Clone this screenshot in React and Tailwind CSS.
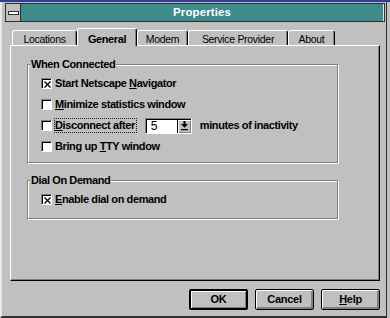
import React from "react";

const F = "font-['Liberation_Sans',Arial,sans-serif]";

function Box({ checked }) {
  return (
    <span className="w-[11px] h-[11px] shrink-0 bg-white border border-t-[#808080] border-l-[#808080] border-b-white border-r-white shadow-[inset_1px_1px_0_#000] flex items-center justify-center">
      {checked && (
        <svg width="7" height="7" viewBox="0 0 7 7" className="ml-[1px] mt-[1px]">
          <path d="M0.5 0.5 L6.5 6.5 M6.5 0.5 L0.5 6.5" stroke="#000" strokeWidth="1.3" fill="none" />
        </svg>
      )}
    </span>
  );
}

function Row({ checked, children, focus, extra }) {
  return (
    <div className="h-[21px] flex items-center pl-[13px]">
      <Box checked={checked} />
      <span
        className={`ml-[2px] border leading-[13px] block whitespace-pre pr-[1px] ${
          focus ? "border-dotted border-[#202020]" : "border-transparent"
        }`}
      >
        {children}
      </span>
      {extra}
    </div>
  );
}

function Group({ label, children, className }) {
  return (
    <div
      className={`relative ml-[16px] w-[311px] border border-[#808080] shadow-[inset_1px_1px_0_#fff,1px_1px_0_#fff] ${className}`}
    >
      <span className="absolute left-[2px] top-[-7px] bg-[#c0c0c0] px-[1px] leading-[13px]">{label}</span>
      {children}
    </div>
  );
}

function Tab({ children, w, selected }) {
  return (
    <div
      className={`${w} flex justify-center rounded-t-[3px] border-t border-l border-white border-r border-r-black shadow-[inset_-1px_0_0_#808080] bg-[#c0c0c0] ${
        selected
          ? "h-[18px] pt-[4px] font-bold text-[11px] tracking-[-0.4px] relative z-20"
          : "h-[15px] mb-[1px] pt-[2px] text-[10.5px] tracking-[-0.3px]"
      }`}
    >
      <span className="leading-[12px]">{children}</span>
    </div>
  );
}

function Btn({ children, def }) {
  return (
    <div
      className={`w-[59px] h-[21px] rounded-[2px] border-black flex items-center justify-center bg-[#c0c0c0] font-bold text-[11px] tracking-[-0.3px] ${
        def
          ? "border-2 shadow-[inset_1px_1px_0_#fff,inset_-1px_-1px_0_#808080]"
          : "border shadow-[inset_1px_1px_0_#fff,inset_-1px_-1px_0_#808080,inset_-2px_-2px_0_#808080]"
      }`}
    >
      {children}
    </div>
  );
}

export default function App() {
  return (
    <div className={`w-[390px] h-[318px] bg-[#c0c0c0] overflow-hidden text-black ${F}`}>
      <div className="h-[2px] bg-[#2a3d9c]" />
      <div className="h-[316px] w-[387px] border-l-2 border-l-[#e8e8e8] border-b-2 border-b-[#303030] border-r border-r-[#303030] pl-[3px] pr-[1px] pt-[1px]">
        {/* Title bar */}
        <div className="h-[19px] flex border border-[#303030]">
          <div className="w-[15px] border-r border-[#303030] bg-[#c0c0c0] flex items-center justify-center">
            <div className="w-[11px] h-[4px] bg-white border border-[#303030]" />
          </div>
          <div className="flex-1 bg-[#3e8b8b] flex items-center justify-center border-r border-r-[#d8e8e8]">
            <span className="text-white font-bold text-[11.5px] leading-[13px] tracking-[0.1px]">Properties</span>
          </div>
        </div>

        {/* Tabs */}
        <div className="mt-[6px] ml-[7px] h-[18px] -mb-[1px] flex items-end relative z-10">
          <Tab w="w-[65px]">Locations</Tab>
          <Tab w="w-[60px]" selected>
            General
          </Tab>
          <Tab w="w-[51px]">Modem</Tab>
          <Tab w="w-[100px]">Service Provider</Tab>
          <Tab w="w-[47px]">About</Tab>
        </div>

        {/* Panel */}
        <div className="ml-[5px] w-[370px] h-[236px] border-t border-l border-white border-r border-b border-r-black border-b-black shadow-[inset_-1px_-1px_0_#808080] pt-[18px] text-[11px] font-bold tracking-[-0.4px]">
          <Group label="When Connected" className="h-[99px] pt-[8px]">
            <Row checked>
              {"Start Netscape "}
              <u className="underline-offset-[1px]">N</u>
              {"avigator"}
            </Row>
            <Row>
              <u className="underline-offset-[1px]">M</u>
              {"inimize statistics window"}
            </Row>
            <Row
              focus
              extra={
                <>
                  <div className="ml-[8px] w-[47px] h-[16px] flex border border-t-[#808080] border-l-[#808080] border-b-white border-r-white">
                    <div className="flex-1 flex border-t border-l border-black">
                      <div className="flex-1 bg-white flex items-center pl-[4px] font-normal text-[12px] leading-[12px]">5</div>
                      <div className="w-[14px] bg-[#c0c0c0] border-l border-black shadow-[inset_1px_1px_0_#fff,inset_-1px_-1px_0_#808080] flex items-center justify-center">
                        <svg width="7" height="10" viewBox="0 0 7 10">
                          <rect x="2.5" y="0" width="2" height="3" fill="#000" />
                          <path d="M0 3 H7 L3.5 6.8 Z" fill="#000" />
                          <rect x="0" y="8" width="7" height="1.2" fill="#000" />
                        </svg>
                      </div>
                    </div>
                  </div>
                  <span className="ml-[8px]">minutes of inactivity</span>
                </>
              }
            >
              <u className="underline-offset-[1px]">D</u>
              {"isconnect after"}
            </Row>
            <Row>
              {"Bring up "}
              <u className="underline-offset-[1px]">T</u>
              {"TY window"}
            </Row>
          </Group>

          <Group label="Dial On Demand" className="h-[39px] pt-[8px] mt-[17px]">
            <Row checked>
              <u className="underline-offset-[1px]">E</u>
              {"nable dial on demand"}
            </Row>
          </Group>
        </div>

        {/* Buttons */}
        <div className="ml-[5px] w-[370px] mt-[8px] flex justify-end gap-[7px]">
          <Btn def>OK</Btn>
          <Btn>Cancel</Btn>
          <Btn>
            <span>
              <u className="underline-offset-[1px]">H</u>elp
            </span>
          </Btn>
        </div>
      </div>
    </div>
  );
}
